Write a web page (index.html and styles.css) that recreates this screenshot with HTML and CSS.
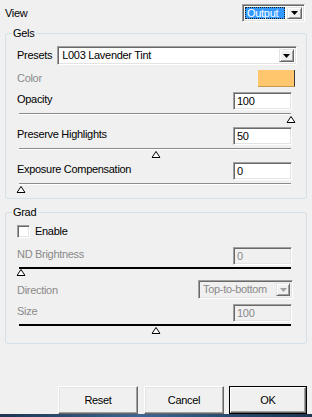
FILE: index.html
```html
<!DOCTYPE html>
<html>
<head>
<meta charset="utf-8">
<link rel="stylesheet" href="styles.css">
</head>
<body>
<div class="view-row">
  <span class="lbl view-lbl">View</span>
  <div class="combo out">
    <span class="combo-text"><span class="hl">Output</span></span>
    <span class="arrow-btn"><svg width="7" height="4" viewBox="0 0 7 4"><polygon points="0,0 7,0 3.5,4" fill="#000"/></svg></span>
  </div>
</div>

<div class="group gels">
  <span class="group-title">Gels</span>
  <div class="row presets">
    <span class="lbl">Presets</span>
    <div class="combo preset-combo">
      <span class="combo-text">L003 Lavender Tint</span>
      <span class="arrow-btn"><svg width="7" height="4" viewBox="0 0 7 4"><polygon points="0,0 7,0 3.5,4" fill="#000"/></svg></span>
    </div>
  </div>
  <div class="row color-row">
    <span class="lbl dis">Color</span>
    <span class="swatch"></span>
  </div>
  <div class="slider-block">
    <div class="row field-row"><span class="lbl">Opacity</span><div class="field">100</div></div>
    <div class="track"></div>
    <div class="thumb-area"><span class="thumb" style="left:100%"><svg width="9" height="7" viewBox="0 0 9 7"><polygon points="4.5,0.5 8.5,6.5 0.5,6.5" fill="#fff" stroke="#000" stroke-width="1"/></svg></span></div>
  </div>
  <div class="slider-block">
    <div class="row field-row"><span class="lbl">Preserve Highlights</span><div class="field">50</div></div>
    <div class="track"></div>
    <div class="thumb-area"><span class="thumb" style="left:50%"><svg width="9" height="7" viewBox="0 0 9 7"><polygon points="4.5,0.5 8.5,6.5 0.5,6.5" fill="#fff" stroke="#000" stroke-width="1"/></svg></span></div>
  </div>
  <div class="slider-block">
    <div class="row field-row"><span class="lbl">Exposure Compensation</span><div class="field">0</div></div>
    <div class="track"></div>
    <div class="thumb-area"><span class="thumb" style="left:0%"><svg width="9" height="7" viewBox="0 0 9 7"><polygon points="4.5,0.5 8.5,6.5 0.5,6.5" fill="#fff" stroke="#000" stroke-width="1"/></svg></span></div>
  </div>
</div>

<div class="group grad">
  <span class="group-title">Grad</span>
  <div class="row check-row">
    <span class="checkbox"></span>
    <span class="lbl">Enable</span>
  </div>
  <div class="slider-block nd">
    <div class="row field-row"><span class="lbl dis">ND Brightness</span><div class="field disabled">0</div></div>
    <div class="track black"></div>
    <div class="thumb-area short"><span class="thumb up" style="left:0%"><svg width="9" height="7" viewBox="0 0 9 7"><polygon points="4.5,0.5 8.5,6.5 0.5,6.5" fill="#fff" stroke="#000" stroke-width="1"/></svg></span></div>
  </div>
  <div class="row dir-row">
    <span class="lbl dis">Direction</span>
    <div class="combo dir-combo">
      <span class="combo-text">Top-to-bottom</span>
      <span class="arrow-btn"><svg width="7" height="4" viewBox="0 0 7 4"><polygon points="0,0 7,0 3.5,4" fill="#a0a0a0"/></svg></span>
    </div>
  </div>
  <div class="slider-block size">
    <div class="row field-row"><span class="lbl dis">Size</span><div class="field disabled">100</div></div>
    <div class="track black"></div>
    <div class="thumb-area"><span class="thumb" style="left:50%"><svg width="9" height="7" viewBox="0 0 9 7"><polygon points="4.5,0.5 8.5,6.5 0.5,6.5" fill="#fff" stroke="#000" stroke-width="1"/></svg></span></div>
  </div>
</div>

<div class="spacer"></div>

<div class="buttons">
  <div class="btn reset">Reset</div>
  <div class="btn cancel">Cancel</div>
  <div class="btn ok"><span class="ok-inner">OK</span></div>
</div>
<div class="taskbar"></div>
</body>
</html>
```

FILE: styles.css
```css
html, body {
  margin: 0;
  padding: 0;
}
body {
  width: 312px;
  height: 417px;
  overflow: hidden;
  background: #f0f0f0;
  font-family: "Liberation Sans", Arial, sans-serif;
  font-size: 11px;
  line-height: 13px;
  letter-spacing: -0.3px;
  color: #000;
  display: flex;
  flex-direction: column;
}

.lbl { white-space: nowrap; }
.dis { color: #8a8a8a; }

/* top row */
.view-row {
  display: flex;
  justify-content: space-between;
  align-items: flex-start;
  padding: 4px 7px 0 5px;
  height: 18px;
}
.view-lbl { margin-top: 3px; }

/* combo boxes */
.combo {
  box-sizing: border-box;
  display: flex;
  align-items: stretch;
  background: #fff;
  border: 1px solid;
  border-color: #a0a0a0 #fff #fff #a0a0a0;
  box-shadow: inset 1px 1px 0 #696969, inset -1px -1px 0 #e3e3e3;
  padding: 2px;
}
.combo-text {
  flex: 1;
  display: flex;
  align-items: center;
  padding-left: 2px;
  white-space: nowrap;
  overflow: hidden;
}
.arrow-btn {
  box-sizing: border-box;
  width: 15px;
  display: flex;
  align-items: center;
  justify-content: center;
  background: #f0f0f0;
  border: 1px solid;
  border-color: #e3e3e3 #696969 #696969 #e3e3e3;
  box-shadow: inset 1px 1px 0 #fff, inset -1px -1px 0 #a0a0a0;
}
.out {
  width: 63px;
  height: 18px;
}
.out .combo-text { padding-left: 0; padding-right: 2px; }
.hl {
  flex: 1;
  height: 100%;
  display: flex;
  align-items: center;
  padding-left: 2px;
  background: #3399ff;
  color: #fff;
  outline: 1px dotted #1a1a1a;
  outline-offset: -1px;
}

/* group boxes */
.group {
  position: relative;
  box-sizing: border-box;
  margin: 0 5px 0 5px;
  border: 1px solid #d5dfe5;
  border-radius: 3px;
  padding: 12px 14px 0 11px;
  display: flex;
  flex-direction: column;
}
.gels { margin-top: 11px; height: 166px; }
.grad { margin-top: 13px; height: 132px; }
.group-title {
  position: absolute;
  top: -7px;
  left: 6px;
  padding: 0 2px 0 1px;
  background: #f0f0f0;
}

.row {
  display: flex;
  align-items: center;
}

.presets .preset-combo {
  flex: 1;
  height: 19px;
  margin-left: 5px;
  margin-right: -5px;
}

.color-row {
  margin-top: 5px;
  justify-content: space-between;
}
.swatch {
  box-sizing: border-box;
  width: 37px;
  height: 17px;
  margin-right: -3px;
  background: #ffc66e;
  border-right: 1px solid #3a3a3a;
  border-bottom: 1px solid #c89a50;
}

/* slider blocks */
.slider-block {
  display: flex;
  flex-direction: column;
}
.gels .slider-block { height: 35px; }
.color-row + .slider-block { margin-top: 5px; }

.field-row {
  justify-content: space-between;
  align-items: flex-start;
  height: 18px;
}
.field-row .lbl { margin-top: 1px; }
.field {
  box-sizing: border-box;
  width: 59px;
  height: 18px;
  background: #fff;
  border: 1px solid;
  border-color: #a0a0a0 #fff #fff #a0a0a0;
  box-shadow: inset 1px 1px 0 #696969, inset -1px -1px 0 #e3e3e3;
  padding: 2px 0 0 3px;
}
.field.disabled {
  background: #f0f0f0;
  color: #8a8a8a;
}

.track {
  margin: 3px 0 0 2px;
  width: 272px;
  height: 2px;
  box-sizing: border-box;
  border-top: 1px solid #8c8c8c;
  border-bottom: 1px solid #fff;
}
.track.black {
  border-top: 1px solid #000;
  border-bottom: 1px solid #000;
  margin-top: 2px;
}
.thumb-area {
  position: relative;
  margin-left: 4px;
  width: 270px;
  height: 12px;
}
.thumb-area.short { height: 11px; }
.thumb {
  position: absolute;
  top: 1px;
  transform: translateX(-50%);
  display: block;
  width: 9px;
  height: 7px;
}
.thumb.up { top: 0; }
.thumb svg { display: block; }

/* grad */
.check-row { height: 13px; }
.checkbox {
  box-sizing: border-box;
  width: 13px;
  height: 13px;
  background: #fff;
  border: 1px solid;
  border-color: #a0a0a0 #fff #fff #a0a0a0;
  box-shadow: inset 1px 1px 0 #696969, inset -1px -1px 0 #e3e3e3;
  margin-right: 5px;
}
.nd { margin-top: 9px; }
.dir-row {
  justify-content: space-between;
  height: 19px;
}
.dir-row .lbl { margin-top: 2px; }
.dir-combo {
  width: 95px;
  height: 19px;
  margin-right: -1px;
  background: #f0f0f0;
  color: #8a8a8a;
}
.dir-combo .arrow-btn { width: 14px; }
.size { margin-top: 5px; }

.spacer { flex: 1; }

/* buttons */
.buttons {
  display: flex;
  justify-content: flex-end;
  gap: 6px;
  padding-right: 5px;
  height: 28px;
}
.btn {
  box-sizing: border-box;
  width: 80px;
  height: 28px;
  display: flex;
  align-items: center;
  justify-content: center;
  background: #f0f0f0;
  border: 1px solid;
  border-color: #fff #696969 #696969 #fff;
  box-shadow: inset -1px -1px 0 #a0a0a0, inset 1px 1px 0 #e3e3e3;
}
.cancel { margin-right: -1px; }
.ok {
  width: 78px;
  border: 1px solid #000;
  box-shadow: none;
  padding: 0;
}
.ok-inner {
  box-sizing: border-box;
  width: 100%;
  height: 100%;
  display: flex;
  align-items: center;
  justify-content: center;
  border: 1px solid;
  border-color: #fff #696969 #696969 #fff;
  box-shadow: inset -1px -1px 0 #a0a0a0;
}
.taskbar {
  height: 3px;
  background: linear-gradient(90deg, #1d3553 0%, #3f6690 45%, #2b4d72 70%, #1d3553 100%);
}
```
